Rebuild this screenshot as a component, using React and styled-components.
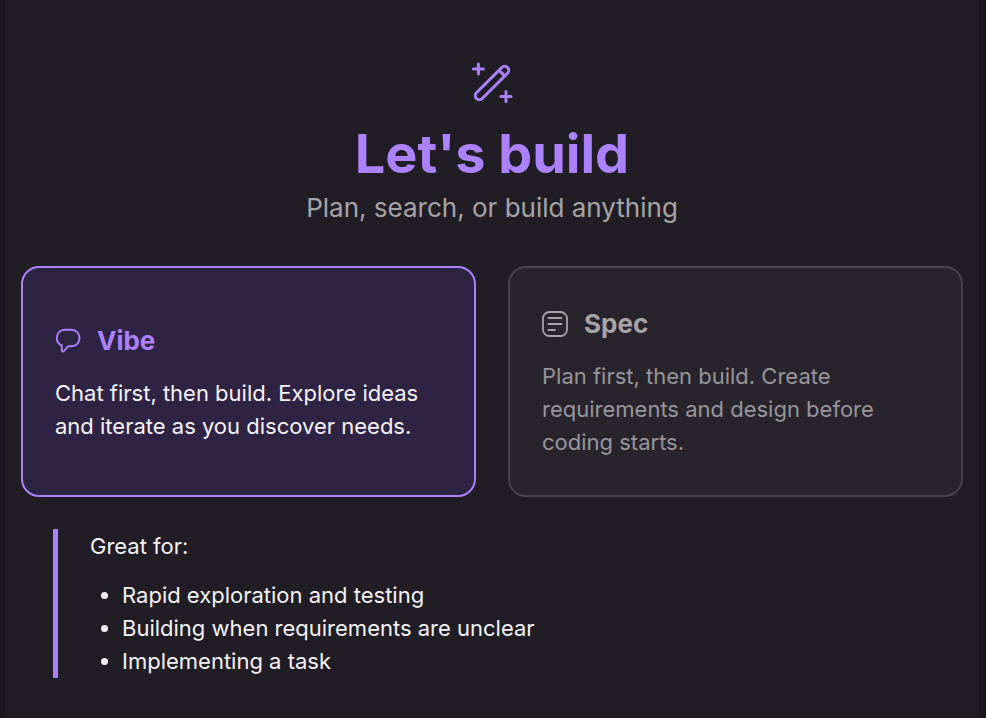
import React, { useState } from "react";
import styled, { createGlobalStyle } from "styled-components";

const GlobalStyle = createGlobalStyle`
  * {
    box-sizing: border-box;
  }

  body {
    margin: 0;
    background: #211d25;
    color: #f4f2f6;
    font-family: Inter, "Liberation Sans", sans-serif;
    font-size: 22px;
    line-height: 33px;
  }
`;

const Panel = styled.main`
  display: flex;
  flex-direction: column;
  min-height: 100vh;
  padding: 60px 16px 32px;
  border: solid #19161d;
  border-width: 0 7px 1px 5px;
`;

const Header = styled.header`
  display: flex;
  flex-direction: column;
  align-items: center;
  margin-bottom: 40px;
  text-align: center;
`;

const Title = styled.h1`
  margin: 14px 0 0;
  color: #ac82fc;
  font-size: 54px;
  font-weight: 700;
  line-height: 72px;
`;

const Subtitle = styled.p`
  margin: 0;
  color: #a7a4a8;
  font-size: 26px;
  line-height: 36px;
`;

const Modes = styled.div`
  display: grid;
  grid-template-columns: 1fr 1fr;
  gap: 32px;
`;

const ModeCard = styled.button`
  display: flex;
  flex-direction: column;
  justify-content: center;
  gap: 18px;
  min-height: 231px;
  padding: 34px 32px 32px;
  border: 2px solid ${(props) => (props.$active ? "#ac82fc" : "#47434c")};
  border-radius: 18px;
  background: ${(props) => (props.$active ? "#2f2344" : "#28242d")};
  color: ${(props) => (props.$active ? "#f4f2f6" : "#98959b")};
  font: inherit;
  text-align: left;
  cursor: pointer;
`;

const ModeName = styled.span`
  display: flex;
  align-items: center;
  gap: 16px;
  color: ${(props) => (props.$active ? "#ac82fc" : "#a7a4a8")};
  font-size: 26px;
  font-weight: 700;
  line-height: 36px;
`;

const Details = styled.section`
  margin: 32px 32px 0;
  padding: 1px 0 0 32px;
  border-left: 5px solid #ac82fc;
`;

const DetailsLabel = styled.p`
  margin: 0 0 16px;
`;

const DetailsList = styled.ul`
  margin: 0;
  padding-left: 32px;
`;

const WandIcon = () => (
  <svg width="44" height="44" viewBox="0 0 44 44" fill="none" stroke="#ac82fc" strokeWidth="3" strokeLinecap="round" aria-hidden="true">
    <rect x="-4.1" y="-22" width="8.2" height="44" rx="4.1" transform="translate(22 23) rotate(45)" />
    <path d="M29.400 10.600l5 5M8.400 4v10M3.400 9h10M36 31.400v10M31 36.400h10" />
  </svg>
);

const ChatIcon = () => (
  <svg width="26" height="26" viewBox="0 0 26 26" fill="none" stroke="currentColor" strokeWidth="1.900" strokeLinejoin="round" aria-hidden="true">
    <path d="M9.500 1.800h7c4.600 0 8 3.400 8 8.200s-3.400 8.200-8 8.200h-3.200l-4.500 4.900c-.9.900-2 .5-2-.8v-5c-3.200-1.200-5-4-5-7.300 0-4.800 3.200-8.200 7.700-8.200z" />
  </svg>
);

const SpecIcon = () => (
  <svg width="26" height="26" viewBox="0 0 26 26" fill="none" stroke="currentColor" strokeWidth="1.8" strokeLinecap="round" aria-hidden="true">
    <rect x="1" y="1" width="24" height="24" rx="6.500" />
    <path d="M6.500 7h13M6.500 13h13M6.500 19h6.500" />
  </svg>
);

const modes = [
  {
    id: "vibe",
    name: "Vibe",
    icon: ChatIcon,
    text: "Chat first, then build. Explore ideas and iterate as you discover needs.",
    greatFor: [
      "Rapid exploration and testing",
      "Building when requirements are unclear",
      "Implementing a task",
    ],
  },
  {
    id: "spec",
    name: "Spec",
    icon: SpecIcon,
    text: "Plan first, then build. Create requirements and design before coding starts.",
    greatFor: [],
  },
];

export default function App() {
  const [selected, setSelected] = useState("vibe");
  const current = modes.find((mode) => mode.id === selected);

  return (
    <>
      <GlobalStyle />
      <Panel>
        <Header>
          <WandIcon />
          <Title>Let's build</Title>
          <Subtitle>Plan, search, or build anything</Subtitle>
        </Header>

        <Modes>
          {modes.map(({ id, name, icon: Icon, text }) => (
            <ModeCard
              key={id}
              type="button"
              $active={id === selected}
              aria-pressed={id === selected}
              onClick={() => setSelected(id)}
            >
              <ModeName $active={id === selected}>
                <Icon />
                {name}
              </ModeName>
              <span>{text}</span>
            </ModeCard>
          ))}
        </Modes>

        {current.greatFor.length > 0 && (
          <Details>
            <DetailsLabel>Great for:</DetailsLabel>
            <DetailsList>
              {current.greatFor.map((item) => (
                <li key={item}>{item}</li>
              ))}
            </DetailsList>
          </Details>
        )}
      </Panel>
    </>
  );
}
